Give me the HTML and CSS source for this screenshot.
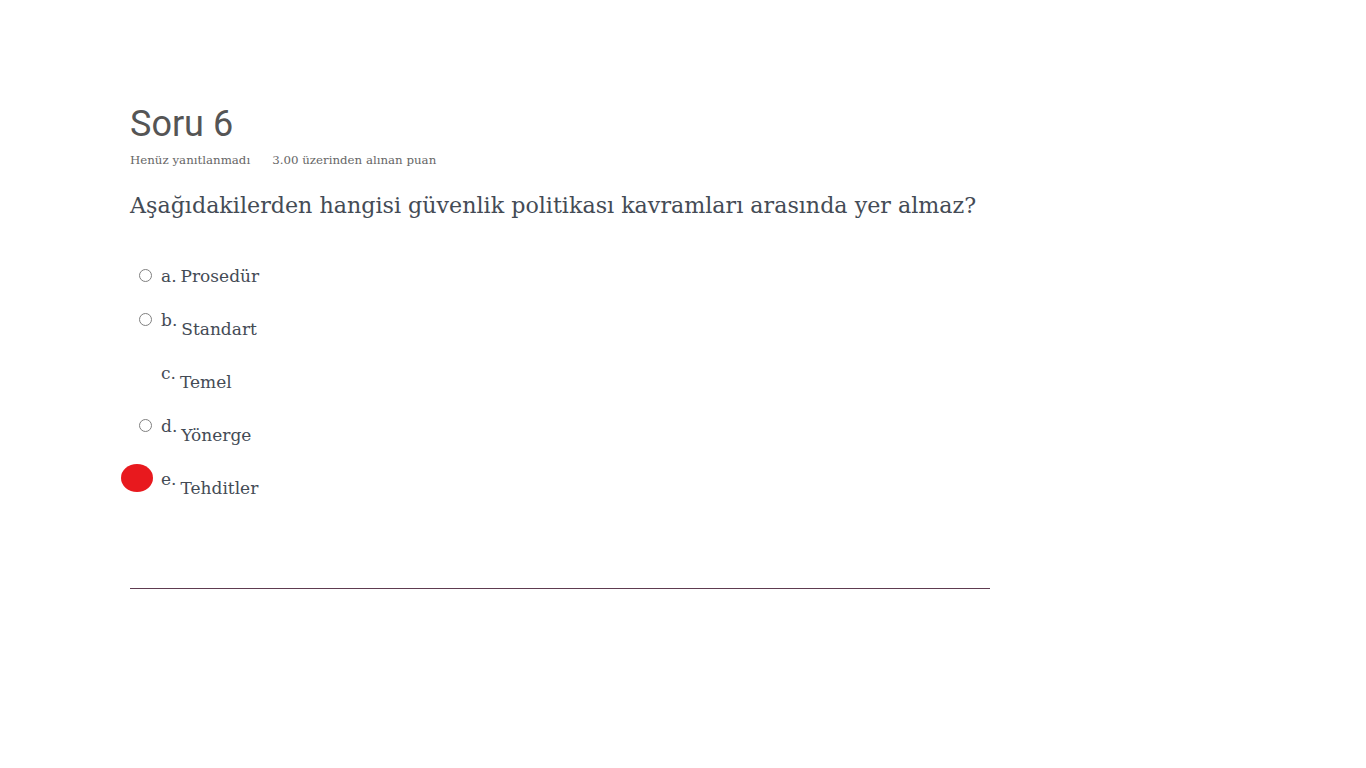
FILE: index.html
```html
<!DOCTYPE html>
<html lang="tr">
<head>
<meta charset="utf-8">
<title>Soru 6</title>
<link rel="stylesheet" href="styles.css">
</head>
<body>
<div class="que">
  <h3 class="qno">Soru 6</h3>
  <div class="meta"><span class="state">Henüz yanıtlanmadı</span><span class="grade">3.00 üzerinden alınan puan</span></div>
  <div class="qtext">Aşağıdakilerden hangisi güvenlik politikası kavramları arasında yer almaz?</div>
  <div class="answer">
    <div class="opt first"><span class="radio"></span><span class="num">a.</span><span class="txt">Prosedür</span></div>
    <div class="opt"><span class="radio"></span><span class="num">b.</span><span class="txt">Standart</span></div>
    <div class="opt"><span class="radio none"></span><span class="num">c.</span><span class="txt">Temel</span></div>
    <div class="opt"><span class="radio"></span><span class="num">d.</span><span class="txt">Yönerge</span></div>
    <div class="opt"><span class="radio marked"><span class="blob"></span></span><span class="num">e.</span><span class="txt">Tehditler</span></div>
  </div>
  <div class="rule"></div>
</div>
</body>
</html>
```

FILE: styles.css
```css
html, body { margin: 0; padding: 0; background: #fff; }
.que {
  padding: 104px 0 0 130px;
  width: 860px;
  font-family: "DejaVu Serif", "Liberation Serif", serif;
  color: #454a52;
}
.qno {
  margin: 0;
  font-family: Roboto, "Liberation Sans", sans-serif;
  font-weight: 400;
  font-size: 36px;
  line-height: 40px;
  color: #555;
}
.meta {
  margin-top: 8px;
  font-size: 11.8px;
  line-height: 16px;
  color: #666;
  display: flex;
  gap: 22px;
}
.qtext {
  margin-top: 21px;
  font-size: 22.2px;
  line-height: 32px;
  color: #444b55;
}
.answer {
  margin-top: 44px;
  display: flex;
  flex-direction: column;
}
.opt {
  display: flex;
  align-items: flex-start;
  height: 53px;
  font-size: 17px;
  line-height: 22px;
  color: #444b55;
}
.opt.first { height: 44px; }
.radio {
  position: relative;
  width: 11px;
  height: 11px;
  border: 1px solid #808080;
  border-radius: 50%;
  margin: 4px 9px 0 9px;
  flex: none;
}
.radio.none { border-color: transparent; }
.radio.marked { border-color: transparent; }
.blob {
  position: absolute;
  left: -19px;
  top: -9px;
  width: 32px;
  height: 28px;
  border-radius: 50%;
  background: #e8191e;
}
.num { margin-right: 4px; }
.opt .txt { padding-top: 9px; }
.opt.first .txt { padding-top: 0; }
.rule {
  margin-top: 67px;
  height: 1px;
  background: #5e3b50;
}
```
